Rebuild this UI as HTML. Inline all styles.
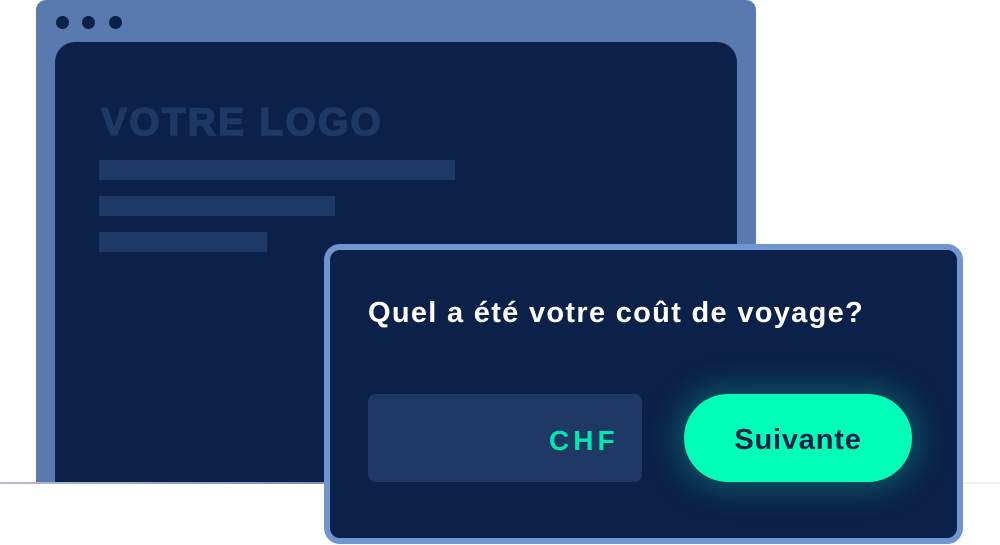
<!DOCTYPE html>
<html><head><meta charset="utf-8"><style>
*{margin:0;padding:0;box-sizing:border-box}
body{width:1000px;height:545px;background:#fff;position:relative;overflow:hidden;font-family:"Liberation Sans",sans-serif}
.line{position:absolute;left:0;top:482px;width:1000px;height:2px;background:linear-gradient(90deg,#b5bccb,#6f86b0 40%,#e6e9ef 70%,#eef0f4)}
.frame{position:absolute;left:36px;top:0;width:720px;height:482px;background:#5a7aaf;border-radius:10px 10px 0 0}
.dot{position:absolute;top:16px;width:13px;height:13px;border-radius:50%;background:#0c2149}
.inner{position:absolute;left:55px;top:42px;width:682px;height:440px;background:#0c2149;border-radius:20px 20px 0 0}
.logo{position:absolute;left:101px;top:101px;font-size:39px;font-weight:bold;color:#1f3966;letter-spacing:2.2px;-webkit-text-stroke:1.5px #1f3966}
.bar{position:absolute;left:99px;height:20px;background:#1f3966}
.pop{position:absolute;left:324px;top:244px;width:639px;height:300px;background:#0c2149;border:6px solid #7096d1;border-radius:16px}
.q{position:absolute;left:368px;top:297px;font-size:29px;font-weight:bold;color:#fff;letter-spacing:1.3px;white-space:nowrap}
.inp{position:absolute;left:368px;top:394px;width:274px;height:88px;background:#1f3966;border-radius:8px}
.chf{position:absolute;left:549px;top:425px;font-size:28px;font-weight:bold;color:#00e8ab;letter-spacing:4px}
.btn{position:absolute;left:684px;top:394px;width:228px;height:88px;background:#00ffb7;border-radius:44px;box-shadow:0 0 30px 6px rgba(0,200,160,.35);color:#0c2149;font-size:29px;font-weight:bold;text-align:center;line-height:92px;letter-spacing:.8px}
</style></head><body>
<div class="line"></div>
<div class="frame"></div>
<div class="dot" style="left:56px"></div><div class="dot" style="left:82px"></div><div class="dot" style="left:109px"></div>
<div class="inner"></div>
<div class="logo">VOTRE LOGO</div>
<div class="bar" style="top:160px;width:356px"></div>
<div class="bar" style="top:196px;width:236px"></div>
<div class="bar" style="top:232px;width:168px"></div>
<div class="pop"></div>
<div class="q">Quel a été votre coût de voyage?</div>
<div class="inp"></div>
<div class="chf">CHF</div>
<div class="btn">Suivante</div>
</body></html>
